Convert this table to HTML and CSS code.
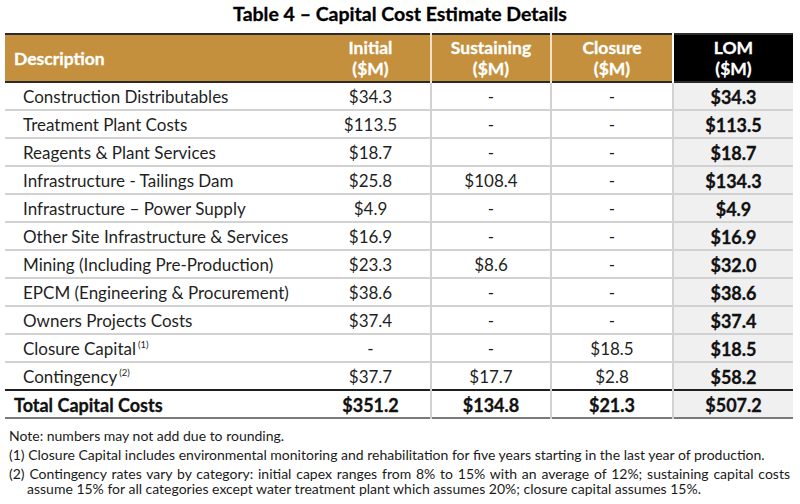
FILE: index.html
```html
<!DOCTYPE html>
<html>
<head>
<meta charset="utf-8">
<link rel="stylesheet" href="styles.css">
</head>
<body>
<div class="page">
  <h1 class="title">Table 4 – Capital Cost Estimate Details</h1>
  <table class="cost">
    <colgroup>
      <col class="c-desc"><col class="c-num"><col class="c-num"><col class="c-num2"><col class="c-num">
    </colgroup>
    <thead>
      <tr>
        <th class="h-desc">Description</th>
        <th>Initial<br>($M)</th>
        <th class="h-sep">Sustaining<br>($M)</th>
        <th class="h-sep">Closure<br>($M)</th>
        <th class="h-lom">LOM<br>($M)</th>
      </tr>
    </thead>
    <tbody>
      <tr><td class="desc">Construction Distributables</td><td>$34.3</td><td class="sep">-</td><td class="sep">-</td><td class="lom">$34.3</td></tr>
      <tr><td class="desc">Treatment Plant Costs</td><td>$113.5</td><td class="sep">-</td><td class="sep">-</td><td class="lom">$113.5</td></tr>
      <tr><td class="desc">Reagents &amp; Plant Services</td><td>$18.7</td><td class="sep">-</td><td class="sep">-</td><td class="lom">$18.7</td></tr>
      <tr><td class="desc">Infrastructure - Tailings Dam</td><td>$25.8</td><td class="sep">$108.4</td><td class="sep">-</td><td class="lom">$134.3</td></tr>
      <tr><td class="desc">Infrastructure – Power Supply</td><td>$4.9</td><td class="sep">-</td><td class="sep">-</td><td class="lom">$4.9</td></tr>
      <tr><td class="desc">Other Site Infrastructure &amp; Services</td><td>$16.9</td><td class="sep">-</td><td class="sep">-</td><td class="lom">$16.9</td></tr>
      <tr><td class="desc">Mining (Including Pre-Production)</td><td>$23.3</td><td class="sep">$8.6</td><td class="sep">-</td><td class="lom">$32.0</td></tr>
      <tr><td class="desc">EPCM (Engineering &amp; Procurement)</td><td>$38.6</td><td class="sep">-</td><td class="sep">-</td><td class="lom">$38.6</td></tr>
      <tr><td class="desc">Owners Projects Costs</td><td>$37.4</td><td class="sep">-</td><td class="sep">-</td><td class="lom">$37.4</td></tr>
      <tr><td class="desc">Closure Capital<sup>(1)</sup></td><td>-</td><td class="sep">-</td><td class="sep">$18.5</td><td class="lom">$18.5</td></tr>
      <tr><td class="desc">Contingency<sup>(2)</sup></td><td>$37.7</td><td class="sep">$17.7</td><td class="sep">$2.8</td><td class="lom">$58.2</td></tr>
    </tbody>
    <tfoot>
      <tr><td class="t-desc">Total Capital Costs</td><td>$351.2</td><td class="sep">$134.8</td><td class="sep">$21.3</td><td class="lom">$507.2</td></tr>
    </tfoot>
  </table>
  <div class="notes">
    <p class="note">Note: numbers may not add due to rounding.</p>
    <p class="note fn">(1) Closure Capital includes environmental monitoring and rehabilitation for five years starting in the last year of production.</p>
    <p class="note fn">(2) Contingency rates vary by category: initial capex ranges from 8% to 15% with an average of 12%; sustaining capital costs assume 15% for all categories except water treatment plant which assumes 20%; closure capital assumes 15%.</p>
  </div>
</div>
</body>
</html>
```
FILE: styles.css
```css
html, body {
  margin: 0;
  padding: 0;
  background: #ffffff;
}
body {
  font-family: Lato, "Liberation Sans", sans-serif;
  color: #1a1a1a;
}
.page {
  width: 800px;
  padding-top: 4px;
}
.title {
  margin: 0 0 9px 0;
  font-size: 19.5px;
  font-weight: 700;
  text-align: center;
  line-height: 20px;
  color: #000;
  -webkit-text-stroke: 0.3px #000;
}
.cost {
  margin-left: 5px;
  width: 788px;
  border-collapse: collapse;
  table-layout: fixed;
}
.c-desc { width: 306px; }
.c-num { width: 120px; }
.c-num2 { width: 122px; }
.cost thead tr {
  border-top: 2px solid #2b2b2b;
  border-bottom: 2px solid #2b2b2b;
}
.cost th {
  background: #c4903d;
  color: #ffffff;
  font-size: 17.5px;
  font-weight: 700;
  line-height: 21px;
  height: 46px;
  padding: 0;
  text-align: center;
  vertical-align: middle;
  -webkit-text-stroke: 0.3px #ffffff;
}
.cost th.h-desc {
  text-align: left;
  padding-left: 9px;
}
.cost th.h-sep {
  border-left: 2px solid #f3e2c6;
}
.cost th.h-lom {
  background: #000000;
  border-left: 2px solid #ffffff;
}
.cost td {
  font-size: 17px;
  line-height: 20px;
  height: 25px;
  padding: 1px 0 0 0;
  text-align: center;
  vertical-align: middle;
  color: #1f1f1f;
}
.cost tbody tr {
  border-bottom: 2px solid #d2d2d2;
}
.cost tbody tr:last-child {
  border-bottom: 2px solid #1f1f1f;
}
.cost td.desc {
  text-align: left;
  padding-left: 18px;
}
.cost td.sep {
  border-left: 2px solid #d2d2d2;
}
.cost td.lom {
  background: #f0f0f0;
  border-left: 2px solid #d2d2d2;
  font-weight: 700;
  font-size: 18px;
  color: #111;
  -webkit-text-stroke: 0.3px #111;
}
.cost sup {
  font-size: 9.5px;
  line-height: 0;
  vertical-align: 7px;
  margin-left: 2px;
}
.cost tfoot tr {
  border-bottom: 2px solid #7a7a7a;
}
.cost tfoot td {
  font-weight: 700;
  font-size: 18px;
  color: #111;
  height: 25px;
  -webkit-text-stroke: 0.3px #111;
}
.cost td.t-desc {
  text-align: left;
  padding-left: 9px;
}
.notes {
  margin-top: 9px;
  padding-left: 9px;
  padding-right: 10px;
}
.note {
  margin: 0 0 4px 0;
  font-size: 14px;
  line-height: 15px;
  color: #1a1a1a;
}
.note.fn {
  padding-left: 18px;
  text-indent: -18px;
  text-align: justify;
}
```
